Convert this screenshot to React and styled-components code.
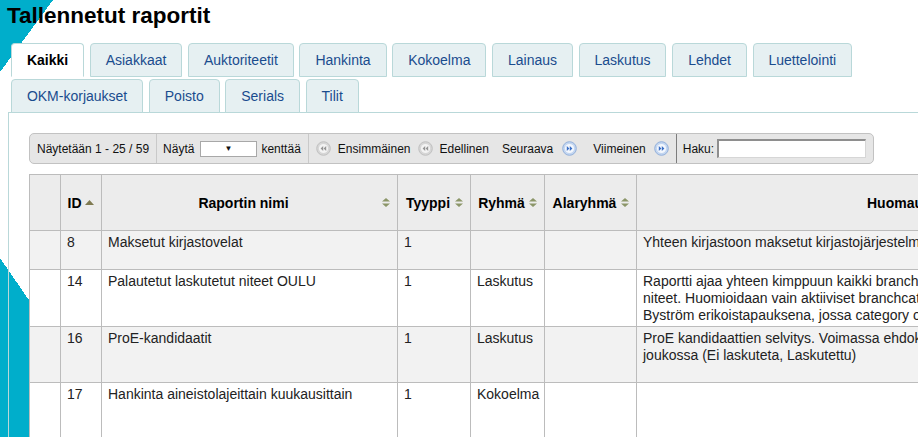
import React from "react";
import styled, { createGlobalStyle } from "styled-components";

const Global = createGlobalStyle`
  html {
    background-color: #fff;
    background-image:
      linear-gradient(to bottom right, #00aecb 50%, transparent 50%),
      linear-gradient(to top right, #00aecb 50%, transparent 50%);
    background-size: 53px 72px, 123px 179px;
    background-position: 0 0, 0 258px;
    background-repeat: no-repeat;
    min-height: 100%;
    overflow: hidden;
  }
  body {
    margin: 0;
    background: transparent;
    font-family: "Liberation Sans", Arial, sans-serif;
    overflow: hidden;
  }
`;

const Page = styled.div`
  width: 1400px;
  padding: 3px 0 0 8px;
`;

const Title = styled.h1`
  margin: 0 0 0 -1px;
  font-size: 22.5px;
  line-height: 26px;
  font-weight: bold;
  color: #000;
`;

const Tabs = styled.div`
  display: flex;
  flex-wrap: wrap;
  column-gap: 5.75px;
  row-gap: 2px;
  width: 860px;
  margin-top: 14px;
  padding-left: 3px;
`;

const Tab = styled.div`
  box-sizing: border-box;
  height: 34px;
  display: flex;
  align-items: center;
  padding: 0 14.9px;
  border: 1px solid #b9d8d9;
  border-bottom-color: ${(p) => (p.$active ? "#fff" : "#b9d8d9")};
  border-radius: 4px 4px 0 0;
  background: ${(p) => (p.$active ? "#fff" : "#e6f0f2")};
  color: ${(p) => (p.$active ? "#000" : "#1a4c8e")};
  font-size: 14px;
  font-weight: ${(p) => (p.$active ? "bold" : "normal")};
  white-space: nowrap;
`;

const Panel = styled.div`
  margin-top: -1px;
  border-top: 1px solid #b9d8d9;
  border-left: 1px solid #b9d8d9;
  padding: 20px 0 0 20px;
  min-height: 400px;
`;

const Toolbar = styled.div`
  display: flex;
  width: fit-content;
  box-sizing: border-box;
  height: 31px;
  border: 1px solid #c2c2c2;
  border-radius: 5px;
  background: #e6e6e6;
  font-size: 12px;
  color: #111;
`;

const Section = styled.div`
  display: flex;
  align-items: center;
  padding: 0 ${(p) => p.$pr ?? 7}px 0 ${(p) => p.$pl ?? 7}px;
  border-right: ${(p) =>
    p.$last ? "none" : `1px solid ${p.$dark ? "#7d7d7d" : "#c9c9c9"}`};
  white-space: nowrap;
`;

const FakeSelect = styled.span`
  box-sizing: border-box;
  width: 57px;
  height: 16px;
  margin: 0 4px 0 6px;
  display: flex;
  align-items: center;
  justify-content: flex-end;
  padding-right: 24px;
  border: 1px solid #a8a8a8;
  background: #fff;
  font-size: 8px;
  color: #111;
`;

const PagerLink = styled.span`
  display: flex;
  align-items: center;
  gap: ${(p) => p.$gap}px;
  margin-left: ${(p) => p.$ml ?? 0}px;
`;

const SearchInput = styled.input`
  box-sizing: border-box;
  width: 149px;
  height: 19px;
  margin: 0 0 0 3px;
  padding: 0 2px;
  border-style: solid;
  border-width: 2px 1px 1px 2px;
  border-color: #8e8e8e #d6d6d6 #d6d6d6 #8e8e8e;
  background: #fff;
  font: 12px "Liberation Sans", Arial, sans-serif;
  outline: none;
`;

const Table = styled.table`
  margin-top: 10px;
  border-collapse: collapse;
  table-layout: fixed;
  width: 1157px;
  font-size: 14px;
  color: #222;
`;

const Col = styled.col`
  width: ${(p) => p.$w}px;
`;

const HeadRow = styled.tr`
  height: 56px;
  background: #ececec;
`;

const Th = styled.th`
  border: 1px solid #bcbcbc;
  padding: 0 7px 0 6px;
  font-weight: bold;
  color: #000;
  vertical-align: middle;
`;

const ThInner = styled.div`
  display: grid;
  grid-template-columns: minmax(0, 1fr) auto;
  align-items: center;
  column-gap: 3px;
`;

const ThLabel = styled.span`
  text-align: center;
  white-space: nowrap;
`;

const Row = styled.tr`
  height: ${(p) => p.$h}px;
  background: ${(p) => (p.$odd ? "#f2f2f2" : "#fff")};
`;

const Td = styled.td`
  border: 1px solid #bcbcbc;
  padding: 3px 6px 2px;
  line-height: 17px;
  vertical-align: top;
`;

const Line = styled.span`
  display: block;
  white-space: nowrap;
`;

const SortIcon = ({ asc }) =>
  asc ? (
    <svg width="9" height="5" viewBox="0 0 9 5">
      <path d="M4.5 0L9 5H0Z" fill="#7f7a51" />
    </svg>
  ) : (
    <svg width="8" height="9" viewBox="0 0 8 9">
      <path d="M4 0L8 3.6H0Z M0 5.4H8L4 9Z" fill="#8c9669" />
    </svg>
  );

const PagerIcon = ({ right, active }) => (
  <svg width="15" height="15" viewBox="0 0 15 15">
    <circle
      cx="7.5"
      cy="7.5"
      r="6.8"
      fill={active ? "#c3d6f0" : "#d6d6d6"}
      stroke={active ? "#93b0db" : "#c0c0c0"}
      strokeWidth="1"
    />
    <circle cx="7.5" cy="7.5" r="4.6" fill={active ? "#f3f7fd" : "#f3f3f3"} />
    <path
      d={
        right
          ? "M4.8 5L7.4 7.5L4.8 10Z M7.8 5L10.4 7.5L7.8 10Z"
          : "M10.2 5L7.6 7.5L10.2 10Z M7.2 5L4.6 7.5L7.2 10Z"
      }
      fill={active ? "#3a6fc6" : "#959595"}
    />
  </svg>
);

const tabsData = [
  "Kaikki",
  "Asiakkaat",
  "Auktoriteetit",
  "Hankinta",
  "Kokoelma",
  "Lainaus",
  "Laskutus",
  "Lehdet",
  "Luettelointi",
  "OKM-korjaukset",
  "Poisto",
  "Serials",
  "Tilit",
];

const columns = [
  { w: 31, label: "", sort: null },
  { w: 41, label: "ID", sort: "asc" },
  { w: 296, label: "Raportin nimi", sort: "both" },
  { w: 73, label: "Tyyppi", sort: "both" },
  { w: 74, label: "Ryhmä", sort: "both" },
  { w: 92, label: "Alaryhmä", sort: "both" },
  { w: 550, label: "Huomautus", sort: "both" },
];

const rows = [
  {
    h: 39,
    id: "8",
    name: "Maksetut kirjastovelat",
    type: "1",
    group: "",
    notes: [
      "Yhteen kirjastoon maksetut kirjastojärjestelmämaksut valitulla aikavälillä.",
    ],
  },
  {
    h: 56,
    id: "14",
    name: "Palautetut laskutetut niteet OULU",
    type: "1",
    group: "Laskutus",
    notes: [
      "Raportti ajaa yhteen kimppuun kaikki branchcategoryyn kuuluvien kirjastojen palautetut",
      "niteet. Huomioidaan vain aktiiviset branchcategoryt. Raportissa on mukana",
      "Byström erikoistapauksena, jossa category on eri.",
    ],
  },
  {
    h: 56,
    id: "16",
    name: "ProE-kandidaatit",
    type: "1",
    group: "Laskutus",
    notes: [
      "ProE kandidaattien selvitys. Voimassa ehdokkaat, jotka ovat tilojen",
      "joukossa (Ei laskuteta, Laskutettu)",
    ],
  },
  {
    h: 70,
    id: "17",
    name: "Hankinta aineistolajeittain kuukausittain",
    type: "1",
    group: "Kokoelma",
    notes: [],
  },
];

export default function App() {
  return (
    <>
      <Global />
      <Page>
        <Title>Tallennetut raportit</Title>
        <Tabs>
          {tabsData.map((t, i) => (
            <Tab key={t} $active={i === 0}>
              {t}
            </Tab>
          ))}
        </Tabs>
        <Panel>
          <Toolbar>
            <Section $pl={7} $pr={7}>
              Näytetään 1 - 25 / 59
            </Section>
            <Section $pl={6} $pr={7}>
              Näytä
              <FakeSelect>▼</FakeSelect>
              kenttää
            </Section>
            <Section $pl={7} $pr={7} $dark>
              <PagerLink $gap={7}>
                <PagerIcon />
                Ensimmäinen
              </PagerLink>
              <PagerLink $gap={7} $ml={7}>
                <PagerIcon />
                Edellinen
              </PagerLink>
              <PagerLink $gap={9} $ml={13}>
                Seuraava
                <PagerIcon right active />
              </PagerLink>
              <PagerLink $gap={8} $ml={16}>
                Viimeinen
                <PagerIcon right active />
              </PagerLink>
            </Section>
            <Section $pl={6} $pr={7} $last>
              Haku:
              <SearchInput type="text" />
            </Section>
          </Toolbar>
          <Table>
            <colgroup>
              {columns.map((c, i) => (
                <Col key={i} $w={c.w} />
              ))}
            </colgroup>
            <thead>
              <HeadRow>
                {columns.map((c, i) => (
                  <Th key={i}>
                    {c.label && (
                      <ThInner>
                        <ThLabel>{c.label}</ThLabel>
                        <SortIcon asc={c.sort === "asc"} />
                      </ThInner>
                    )}
                  </Th>
                ))}
              </HeadRow>
            </thead>
            <tbody>
              {rows.map((r, i) => (
                <Row key={r.id} $h={r.h} $odd={i % 2 === 0}>
                  <Td />
                  <Td>{r.id}</Td>
                  <Td>{r.name}</Td>
                  <Td>{r.type}</Td>
                  <Td>{r.group}</Td>
                  <Td />
                  <Td>
                    {r.notes.map((n, k) => (
                      <Line key={k}>{n}</Line>
                    ))}
                  </Td>
                </Row>
              ))}
            </tbody>
          </Table>
        </Panel>
      </Page>
    </>
  );
}
